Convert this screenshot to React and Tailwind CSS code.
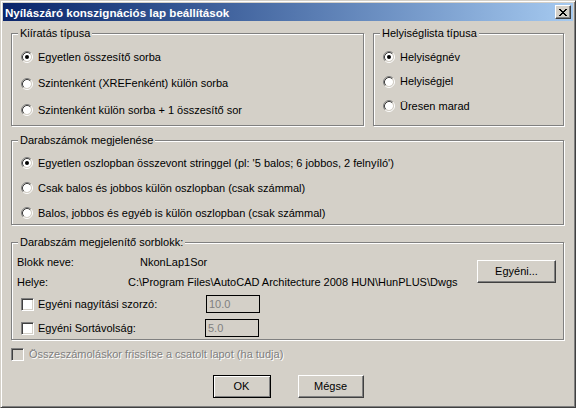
import React from 'react'

function Radio({ checked }) {
  return (
    <svg width="12" height="12" viewBox="0 0 12 12" className="shrink-0">
      <circle cx="6" cy="6" r="4" fill="#fff" />
      <path d="M2.11 9.89 A5.5 5.5 0 0 1 9.89 2.11" fill="none" stroke="#808080" />
      <path d="M9.89 2.11 A5.5 5.5 0 0 1 2.11 9.89" fill="none" stroke="#fff" />
      <path d="M2.82 9.18 A4.5 4.5 0 0 1 9.18 2.82" fill="none" stroke="#404040" />
      <path d="M9.18 2.82 A4.5 4.5 0 0 1 2.82 9.18" fill="none" stroke="#D4D0C8" />
      {checked && <circle cx="6" cy="6" r="2" fill="#000" />}
    </svg>
  )
}

function Check({ disabled }) {
  return (
    <div
      className={`w-[13px] h-[13px] shrink-0 border border-t-[#808080] border-l-[#808080] border-r-white border-b-white shadow-[inset_1px_1px_0_#404040,inset_-1px_-1px_0_#D4D0C8] ${disabled ? 'bg-[#D4D0C8]' : 'bg-white'}`}
    />
  )
}

function Option({ label, checked }) {
  return (
    <div className="h-[16px] flex items-center gap-[5px]">
      <Radio checked={checked} />
      <span>{label}</span>
    </div>
  )
}

function Group({ title, className, children }) {
  return (
    <div className={`relative border border-[#808080] shadow-[inset_1px_1px_0_#fff,1px_1px_0_#fff] ${className}`}>
      <span className="absolute -top-[7px] left-[6px] px-[2px] bg-[#D4D0C8] leading-[13px]">{title}</span>
      {children}
    </div>
  )
}

function Button({ children, isDefault, className }) {
  return (
    <button
      className={`h-[23px] flex items-center justify-center bg-[#D4D0C8] ${
        isDefault
          ? 'border border-black shadow-[inset_1px_1px_0_#fff,inset_-1px_-1px_0_#808080]'
          : 'border border-t-white border-l-white border-r-[#404040] border-b-[#404040] shadow-[inset_-1px_-1px_0_#808080]'
      } ${className}`}
    >
      {children}
    </button>
  )
}

export default function App() {
  return (
    <div className="w-[576px] h-[408px] bg-[#D4D0C8] border border-t-[#D4D0C8] border-l-[#D4D0C8] border-r-[#404040] border-b-[#404040] shadow-[inset_1px_1px_0_#fff,inset_-1px_-1px_0_#808080] p-[2px] flex flex-col text-[11px] leading-[13px] text-black font-['Liberation_Sans',Arial,sans-serif]">
      {/* Title bar */}
      <div className="h-[18px] shrink-0 flex items-center justify-between pl-[2px] pr-[2px] bg-linear-to-r from-[#0A246A] to-[#A6CAF0]">
        <span className="text-white font-bold text-[11.6px]">Nyílászáró konszignációs lap beállítások</span>
        <div className="w-[16px] h-[14px] flex items-center justify-center bg-[#D4D0C8] border border-t-white border-l-white border-r-[#404040] border-b-[#404040] shadow-[inset_-1px_-1px_0_#808080]">
          <svg width="8" height="7" viewBox="0 0 8 7" shapeRendering="crispEdges">
            <path d="M0 0h2v1h-2zM6 0h2v1h-2zM1 1h2v1h-2zM5 1h2v1h-2zM2 2h4v1h-4zM3 3h2v1h-2zM2 4h4v1h-4zM1 5h2v1h-2zM5 5h2v1h-2zM0 6h2v1h-2zM6 6h2v1h-2z" fill="#000" />
          </svg>
        </div>
      </div>

      <div className="flex flex-col pl-[8px] pr-[9px]">
        {/* Top row */}
        <div className="flex gap-[9px] mt-[12px]">
          <Group title="Kiíratás típusa" className="w-[353px] h-[93px]">
            <div className="flex flex-col gap-[10.5px] pt-[15px] pl-[9px]">
              <Option label="Egyetlen összesítő sorba" checked />
              <Option label="Szintenként (XREFenként) külön sorba" />
              <Option label="Szintenként külön sorba + 1 összesítő sor" />
            </div>
          </Group>
          <Group title="Helyiséglista típusa" className="w-[191px] h-[93px]">
            <div className="flex flex-col gap-[8.5px] pt-[15px] pl-[9px]">
              <Option label="Helyiségnév" checked />
              <Option label="Helyiségjel" />
              <Option label="Üresen marad" />
            </div>
          </Group>
        </div>

        <Group title="Darabszámok megjelenése" className="h-[85px] mt-[14px]">
          <div className="flex flex-col gap-[9px] pt-[14px] pl-[9px]">
            <Option label="Egyetlen oszlopban összevont stringgel (pl: '5 balos; 6 jobbos, 2 felnyíló')" checked />
            <Option label="Csak balos és jobbos külön oszlopban (csak számmal)" />
            <Option label="Balos, jobbos és egyéb is külön oszlopban (csak számmal)" />
          </div>
        </Group>

        <Group title="Darabszám megjelenítő sorblokk:" className="h-[98px] mt-[17px]">
          <div className="flex flex-col pt-[13px] pr-[7px]">
            <div className="flex items-start">
              <div className="flex flex-col gap-[7px] pl-[5px]">
                <div className="flex">
                  <span className="w-[123px]">Blokk neve:</span>
                  <span>NkonLap1Sor</span>
                </div>
                <div className="flex">
                  <span className="w-[111px]">Helye:</span>
                  <span>C:\Program Files\AutoCAD Architecture 2008 HUN\HunPLUS\Dwgs</span>
                </div>
              </div>
              <Button className="ml-auto mt-[4px] w-[79px] h-[20px]">Egyéni...</Button>
            </div>
            <div className="flex items-center h-[18px] mt-[6px] pl-[9px]">
              <Check />
              <span className="w-[168px] ml-[4px]">Egyéni nagyítási szorzó:</span>
              <div className="w-[54px] h-[18px] border border-black px-[2px] flex items-center text-[#808080]">10.0</div>
            </div>
            <div className="flex items-center h-[18px] mt-[6px] pl-[9px]">
              <Check />
              <span className="w-[167px] ml-[4px]">Egyéni Sortávolság:</span>
              <div className="w-[54px] h-[18px] border border-black px-[2px] flex items-center text-[#808080]">5.0</div>
            </div>
          </div>
        </Group>

        <div className="flex items-center gap-[5px] mt-[8px]">
          <Check disabled />
          <span className="text-[#808080] [text-shadow:1px_1px_0_#fff]">Összeszámoláskor frissítse a csatolt lapot (ha tudja)</span>
        </div>
      </div>

      <div className="flex justify-center gap-[27px] mt-[14px]">
        <Button isDefault className="w-[58px]">OK</Button>
        <Button className="w-[66px]">Mégse</Button>
      </div>
    </div>
  )
}
